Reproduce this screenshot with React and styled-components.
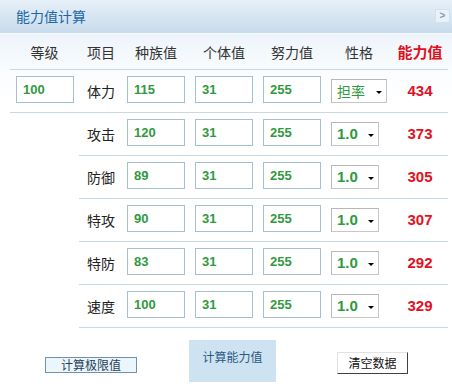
import React from "react";
import styled, { createGlobalStyle } from "styled-components";

const Global = createGlobalStyle`
  html, body { margin: 0; padding: 0; background: #fff; }
  body { font-family: "Noto Sans CJK SC", "Liberation Sans", sans-serif; }
  * { box-sizing: border-box; }
`;

const Panel = styled.div`
  width: 452px;
  height: 391px;
  overflow: hidden;
  background: linear-gradient(#edf4fa 34px, #fbfdfe 75px, #fff 110px);
`;

const TitleBar = styled.div`
  height: 34px;
  display: flex;
  align-items: center;
  justify-content: space-between;
  padding: 0 2px 0 16px;
  background: linear-gradient(#e6f0f8, #c8dbeb);
  border-bottom: 1px solid #f4f9fd;
`;

const Title = styled.div`
  color: #1c66a8;
  font-size: 14px;
  line-height: 16px;
  margin-top: -2px;
`;

const CollapseBox = styled.div`
  width: 15px;
  height: 14px;
  margin-top: -2px;
  border: 1px solid #d3e1ec;
  background: #eaf2f9;
  color: #7f9cb6;
  font: bold 10px/12px "Liberation Sans", sans-serif;
  text-align: center;
`;

const Body = styled.div`
  padding: 0 4px 0 10px;
`;

const HeadRow = styled.div`
  display: flex;
  align-items: center;
  height: 35px;
`;

const HeadCell = styled.div`
  width: ${(p) => p.$w}px;
  padding-left: ${(p) => p.$pl || 0}px;
  padding-right: ${(p) => p.$pr || 0}px;
  text-align: ${(p) => (p.$left ? "left" : "center")};
  font-size: ${(p) => (p.$red ? 15 : 14)}px;
  font-weight: ${(p) => (p.$red ? "bold" : "normal")};
  color: ${(p) => (p.$red ? "#e0101e" : "#333")};
  line-height: 16px;
  white-space: nowrap;
`;

const Table = styled.div`
  border-top: 1px solid #c9d9e4;
`;

const Row = styled.div`
  display: flex;
  align-items: center;
  height: 43px;
  border-bottom: 1px solid #c9d9e4;
  margin-left: ${(p) => (p.$indent ? 69 : 0)}px;
`;

const LevelCell = styled.div`
  width: 69px;
  padding-left: 6px;
  display: flex;
`;

const Label = styled.div`
  width: 48px;
  padding-left: 8px;
  font-size: 14px;
  line-height: 16px;
  color: #222;
`;

const FieldCell = styled.div`
  width: 68px;
  display: flex;
`;

const NumInput = styled.input`
  width: 58px;
  height: 27px;
  margin: -4px 0 0 0;
  border: 1px solid #a6c0d0;
  border-radius: 0;
  padding: 0 0 0 6px;
  background: #fff;
  color: #2f9a3e;
  font: bold 13px "Liberation Sans", sans-serif;
  outline: none;
`;

const NatureCell = styled.div`
  width: 61px;
  display: flex;
`;

const Picker = styled.div`
  width: ${(p) => (p.$wide ? 56 : 48)}px;
  height: 24px;
  display: flex;
  align-items: center;
  justify-content: space-between;
  padding: 0 4px 0 5px;
  border: 1px solid #c6c6c6;
  border-top-color: #b8b8b8;
  border-left-color: #b8b8b8;
  background: #fff;
  color: #2f9a3e;
`;

const PickerText = styled.span`
  font: ${(p) => (p.$cjk ? "normal 14px/16px \"Noto Sans CJK SC\", sans-serif" : "bold 15px/16px \"Liberation Sans\", sans-serif")};
`;

const Arrow = styled.span`
  width: 0;
  height: 0;
  border-left: 3px solid transparent;
  border-right: 3px solid transparent;
  border-top: 3px solid #000;
  margin-top: 2px;
`;

const Result = styled.div`
  width: 56px;
  text-align: center;
  font: bold 15px/16px "Liberation Sans", sans-serif;
  color: #e2101e;
`;

const Footer = styled.div`
  display: flex;
  align-items: flex-start;
  padding-left: 45px;
  height: 62px;
`;

const LimitButton = styled.button`
  width: 92px;
  height: 16px;
  margin-top: 29px;
  padding: 0;
  border: 1px solid #7391aa;
  background: #ebf5fc;
  color: #1f3f5a;
  font: 12px/14px "Noto Sans CJK SC", sans-serif;
`;

const CalcButton = styled.button`
  width: 87px;
  height: 42px;
  margin: 12px 0 0 52px;
  padding: 10px 0 0;
  border: none;
  background: #cde3f2;
  color: #2a5a82;
  font: 12px/14px "Noto Sans CJK SC", sans-serif;
  align-self: flex-start;
  display: flex;
  justify-content: center;
  align-items: flex-start;
`;

const ClearButton = styled.button`
  width: 71px;
  height: 22px;
  margin: 24px 0 0 61px;
  padding: 0;
  border: 1px solid;
  border-color: #e2e2e2 #404040 #404040 #e2e2e2;
  background: #fff;
  color: #111;
  font: 12px/18px "Noto Sans CJK SC", sans-serif;
`;

const stats = [
  { name: "体力", base: 115, iv: 31, ev: 255, nature: "担率", val: 434 },
  { name: "攻击", base: 120, iv: 31, ev: 255, nature: "1.0", val: 373 },
  { name: "防御", base: 89, iv: 31, ev: 255, nature: "1.0", val: 305 },
  { name: "特攻", base: 90, iv: 31, ev: 255, nature: "1.0", val: 307 },
  { name: "特防", base: 83, iv: 31, ev: 255, nature: "1.0", val: 292 },
  { name: "速度", base: 100, iv: 31, ev: 255, nature: "1.0", val: 329 },
];

export default function App() {
  return (
    <>
      <Global />
      <Panel>
        <TitleBar>
          <Title>能力值计算</Title>
          <CollapseBox>&gt;</CollapseBox>
        </TitleBar>
        <Body>
          <HeadRow>
            <HeadCell $w={69}>等级</HeadCell>
            <HeadCell $w={48} $pl={8} $left>项目</HeadCell>
            <HeadCell $w={68} $pr={10}>种族值</HeadCell>
            <HeadCell $w={68} $pr={10}>个体值</HeadCell>
            <HeadCell $w={68} $pr={10}>努力值</HeadCell>
            <HeadCell $w={61} $pr={5}>性格</HeadCell>
            <HeadCell $w={56} $red>能力值</HeadCell>
          </HeadRow>
          <Table>
            {stats.map((s, i) => (
              <Row key={s.name} $indent={i > 0}>
                {i === 0 && (
                  <LevelCell>
                    <NumInput defaultValue="100" />
                  </LevelCell>
                )}
                <Label>{s.name}</Label>
                <FieldCell>
                  <NumInput defaultValue={s.base} />
                </FieldCell>
                <FieldCell>
                  <NumInput defaultValue={s.iv} />
                </FieldCell>
                <FieldCell>
                  <NumInput defaultValue={s.ev} />
                </FieldCell>
                <NatureCell>
                  <Picker $wide={i === 0}>
                    <PickerText $cjk={i === 0}>{s.nature}</PickerText>
                    <Arrow />
                  </Picker>
                </NatureCell>
                <Result>{s.val}</Result>
              </Row>
            ))}
          </Table>
        </Body>
        <Footer>
          <LimitButton>计算极限值</LimitButton>
          <CalcButton>计算能力值</CalcButton>
          <ClearButton>清空数据</ClearButton>
        </Footer>
      </Panel>
    </>
  );
}
